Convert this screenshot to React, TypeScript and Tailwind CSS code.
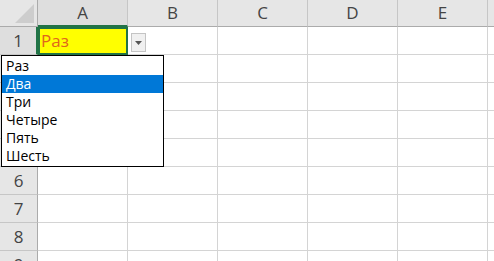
import React from 'react'

const cols = ['A', 'B', 'C', 'D', 'E']
const rows = [1, 2, 3, 4, 5, 6, 7, 8, 9]
const items = ['Раз', 'Два', 'Три', 'Четыре', 'Пять', 'Шесть']

export default function App() {
  return (
    <div
      className="relative h-[261px] w-[494px] overflow-hidden bg-white"
      style={{ fontFamily: '"Open Sans", "Noto Sans", sans-serif' }}
    >
      <div className="grid grid-cols-[38px_90px_90px_90px_90px_90px_1fr] grid-rows-[27px_repeat(9,28px)]">
        {/* select-all corner */}
        <div className="flex items-end justify-end border-r border-b border-[#ababab] bg-[#e6e6e6] pr-[3px] pb-[3px]">
          <svg width="19" height="19" viewBox="0 0 19 19">
            <path d="M19 0 V19 H0 Z" fill="#cdcdcd" />
          </svg>
        </div>
        {/* column headers */}
        {cols.map((c) => (
          <div
            key={c}
            className={
              'flex items-center justify-center border-r border-[#c6c6c6] text-[17px] text-[#444] ' +
              (c === 'A'
                ? 'border-b-2 border-b-[#217346] bg-[#dedede]'
                : 'border-b border-b-[#ababab] bg-[#e6e6e6]')
            }
          >
            {c}
          </div>
        ))}
        <div className="border-b border-[#ababab] bg-[#e6e6e6]" />

        {rows.map((r) => (
          <React.Fragment key={r}>
            <div
              className={
                'flex items-center justify-center border-b border-[#c6c6c6] text-[17px] text-[#444] ' +
                (r === 1
                  ? 'border-r-2 border-r-[#217346] bg-[#dedede]'
                  : 'border-r border-r-[#ababab] bg-[#e6e6e6]')
              }
            >
              {r}
            </div>
            {cols.map((c) =>
              r === 1 && c === 'A' ? (
                <div
                  key={c}
                  className="flex items-center border-2 border-[#217346] bg-[#ffff00] pl-[1px] text-[17px] text-[#e0661c]"
                >
                  Раз
                </div>
              ) : (
                <div key={c} className="border-r border-b border-[#d4d4d4]" />
              )
            )}
            <div className="border-b border-[#d4d4d4]" />
          </React.Fragment>
        ))}
      </div>

      {/* dropdown arrow button */}
      <div className="absolute top-[33px] left-[131px] flex h-[19px] w-[15px] items-center justify-center border border-[#c4c4c4] bg-[#f0f0f0]">
        <svg width="7" height="4" viewBox="0 0 7 4">
          <path d="M0 0 H7 L3.5 4 Z" fill="#555" />
        </svg>
      </div>

      {/* list box */}
      <div className="absolute top-[55px] left-[1px] flex w-[163px] flex-col border border-black bg-white py-[1px] text-[14px] leading-[18px] text-black">
        {items.map((it, i) => (
          <div
            key={it}
            className={
              'h-[18px] pl-[4px] ' + (i === 1 ? 'bg-[#0078d7] text-white' : '')
            }
          >
            {it}
          </div>
        ))}
      </div>
    </div>
  )
}
